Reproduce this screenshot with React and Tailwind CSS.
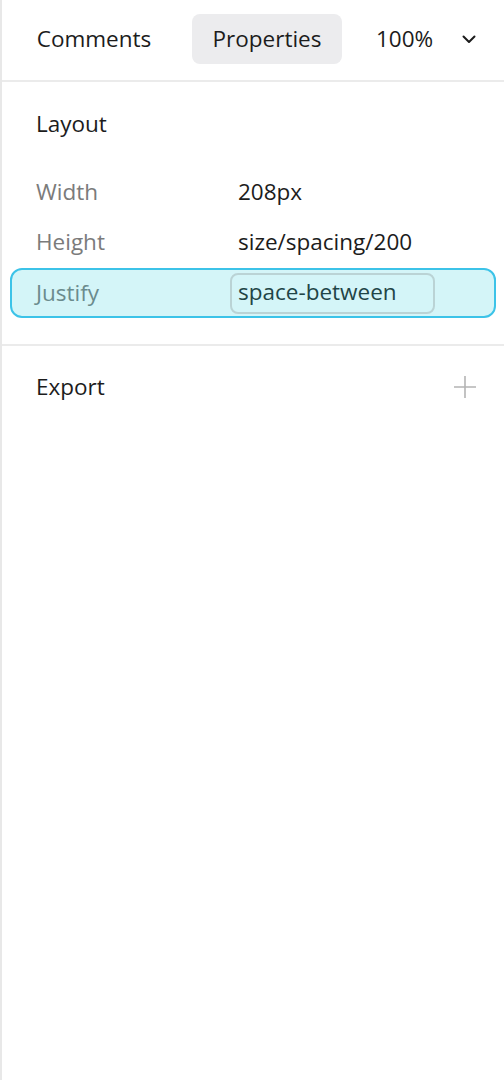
import React from 'react';

const font = { fontFamily: '"Open Sans", "Noto Sans", sans-serif' };

const rows = [
  { label: 'Width', value: '208px' },
  { label: 'Height', value: 'size/spacing/200' },
  { label: 'Justify', value: 'space-between', active: true },
];

const Chevron = () => (
  <svg width="14" height="9" viewBox="0 0 14 9" fill="none">
    <path d="M1.5 1.5 L7 7 L12.5 1.5" stroke="#1c1c1c" strokeWidth="2" strokeLinecap="round" strokeLinejoin="round" />
  </svg>
);

const Plus = () => (
  <svg width="24" height="24" viewBox="0 0 24 24" fill="none">
    <path d="M12 1 V23 M1 12 H23" stroke="#b4b4b4" strokeWidth="1.6" />
  </svg>
);

export default function App() {
  return (
    <div
      className="w-[504px] h-[1080px] bg-white border-l-2 border-[#e8e8e8] text-[22.5px] font-medium text-[#1c1c1c] overflow-hidden"
      style={font}
    >
      {/* Header tabs */}
      <div className="h-[82px] border-b-2 border-[#ebebeb] flex items-start pt-[14px]">
        <button className="ml-[14px] w-[156px] h-[50px] rounded-lg text-center leading-[48px]">
          Comments
        </button>
        <button className="ml-[20px] w-[150px] h-[50px] rounded-lg bg-[#ececee] text-center leading-[48px]">
          Properties
        </button>
        <div className="ml-[34px] h-[50px] flex items-center">
          <span className="leading-[48px]">100%</span>
          <span className="ml-[29px] flex items-center">
            <Chevron />
          </span>
        </div>
      </div>

      {/* Layout */}
      <div className="pt-[28px] pb-[26px] border-b-2 border-[#ebebeb]">
        <div className="px-[34px] leading-[28px]">Layout</div>
        <div className="mt-[30px] px-[8px]">
          {rows.map((row) =>
            row.active ? (
              <div
                key={row.label}
                className="h-[50px] flex items-center pl-[24px] border-2 border-[#3cc3e8] bg-[#d4f5f8] rounded-[12px]"
              >
                <span className="w-[202px] text-[#6b8b8d]">{row.label}</span>
                <span className="-ml-[8px] w-[205px] h-[41px] border-2 border-[#bad3d5] rounded-[8px] pl-[6px] pb-[2px] flex items-center text-[#1f4547]">
                  {row.value}
                </span>
              </div>
            ) : (
              <div
                key={row.label}
                className="h-[50px] flex items-center pl-[24px] pb-[2px] border-2 border-transparent"
              >
                <span className="w-[202px] text-[#7b7b7b]">{row.label}</span>
                <span>{row.value}</span>
              </div>
            )
          )}
        </div>
      </div>

      {/* Export */}
      <div className="pt-[27px] px-[34px] pr-[27px] flex items-center justify-between">
        <span className="leading-[28px]">Export</span>
        <Plus />
      </div>
    </div>
  );
}
